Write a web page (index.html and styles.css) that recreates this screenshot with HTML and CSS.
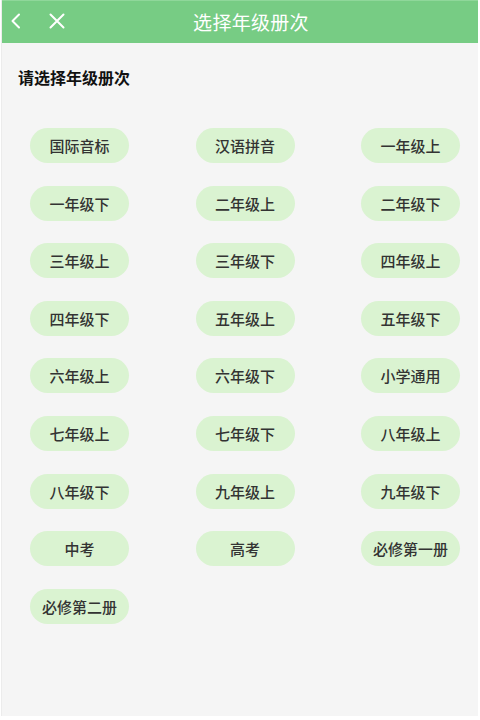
FILE: index.html
```html
<!DOCTYPE html>
<html lang="zh">
<head>
<meta charset="utf-8">
<title>选择年级册次</title>
<link rel="stylesheet" href="styles.css">
</head>
<body>
<div class="app">
  <header class="topbar">
    <div class="nav-icons">
      <svg class="icon back" width="14" height="16" viewBox="0 0 14 16"><path d="M10 1.5 L3.5 8 L10 14.5" fill="none" stroke="#fff" stroke-width="2" stroke-linecap="round" stroke-linejoin="round"/></svg>
      <svg class="icon close" width="16" height="16" viewBox="0 0 16 16"><path d="M1.5 1.5 L14.5 14.5 M14.5 1.5 L1.5 14.5" fill="none" stroke="#fff" stroke-width="2" stroke-linecap="round"/></svg>
    </div>
    <h1 class="title">选择年级册次</h1>
  </header>
  <main class="content">
    <h2 class="subtitle">请选择年级册次</h2>
    <div class="grid">
      <div class="pill">国际音标</div>
      <div class="pill">汉语拼音</div>
      <div class="pill">一年级上</div>
      <div class="pill">一年级下</div>
      <div class="pill">二年级上</div>
      <div class="pill">二年级下</div>
      <div class="pill">三年级上</div>
      <div class="pill">三年级下</div>
      <div class="pill">四年级上</div>
      <div class="pill">四年级下</div>
      <div class="pill">五年级上</div>
      <div class="pill">五年级下</div>
      <div class="pill">六年级上</div>
      <div class="pill">六年级下</div>
      <div class="pill">小学通用</div>
      <div class="pill">七年级上</div>
      <div class="pill">七年级下</div>
      <div class="pill">八年级上</div>
      <div class="pill">八年级下</div>
      <div class="pill">九年级上</div>
      <div class="pill">九年级下</div>
      <div class="pill">中考</div>
      <div class="pill">高考</div>
      <div class="pill">必修第一册</div>
      <div class="pill">必修第二册</div>
    </div>
  </main>
</div>
</body>
</html>
```

FILE: styles.css
```css
html, body {
  margin: 0;
  padding: 0;
  background: #ffffff;
}
body {
  font-family: "Noto Sans CJK SC", "Noto Sans", sans-serif;
}
.app {
  width: 476px;
  height: 716px;
  margin-left: 1px;
  background: #f5f5f5;
  border-left: 1px solid #ececec;
  display: flex;
  flex-direction: column;
}
.topbar {
  position: relative;
  height: 43px;
  background: #77cc84;
  border-top: 1px solid #8fd79a;
  box-sizing: border-box;
  display: flex;
  align-items: center;
  justify-content: center;
}
.nav-icons {
  position: absolute;
  left: 7px;
  top: 12px;
  display: flex;
  align-items: center;
  gap: 26px;
}
.icon { display: block; }
.title {
  margin: 0 0 2px 22px;
  font-size: 19px;
  font-weight: 400;
  color: #ffffff;
  letter-spacing: 0.3px;
}
.content {
  padding: 0 18px 0 28px;
}
.subtitle {
  margin: 22px 0 0 -12px;
  font-size: 16px;
  font-weight: 700;
  color: #111;
  line-height: 24px;
}
.grid {
  margin-top: 39px;
  display: grid;
  grid-template-columns: repeat(3, 99px);
  justify-content: space-between;
  row-gap: 22.6px;
}
.pill {
  height: 35px;
  border-radius: 18px;
  background: #daf3d1;
  color: #333;
  font-size: 15px;
  font-weight: 500;
  display: flex;
  align-items: center;
  justify-content: center;
}
```
